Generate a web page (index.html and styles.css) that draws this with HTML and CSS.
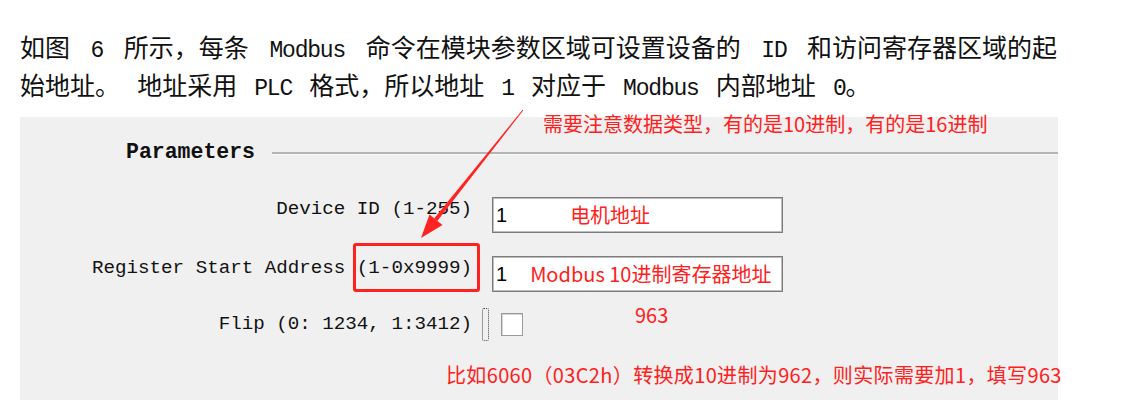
FILE: index.html
```html
<!DOCTYPE html>
<html>
  <head>
    <title>Modbus Parameters</title>
    <link rel="stylesheet" href="styles.css">
  </head>

  <body>
    <div class="page">
      <div class="doc">
        <p class="line line-first">如图<span class="en"> 6 </span>所示，每条<span class="en"> Modbus </span>命令在模块参数区域可设置设备的<span class="en"> ID </span>和访问寄存器区域的起</p>
        <p class="line line-last">始地址。<span class="en"> </span>地址采用<span class="en"> PLC </span>格式，所以地址<span class="en"> 1 </span>对应于<span class="en"> Modbus </span>内部地址<span class="en"> 0</span>。</p>
      </div>

      <div class="panel">
        <div class="legend">
          <span class="legend-title">Parameters</span>
          <span class="legend-rule"></span>
        </div>

        <div class="field field-id">
          <label class="field-label">Device ID (1-255)</label>
          <div class="text-box">
            <span class="value">1</span>
            <span class="note note-id">电机地址</span>
          </div>
        </div>

        <div class="field field-register">
          <label class="field-label">Register Start Address (1-0x9999)</label>
          <div class="text-box">
            <span class="value">1</span>
            <span class="note note-register">Modbus 10进制寄存器地址</span>
          </div>
        </div>

        <div class="field field-flip">
          <label class="field-label">Flip (0: 1234, 1:3412)</label>
          <span class="focus-rect"></span>
          <span class="check-box"></span>
        </div>

        <!-- annotations drawn over the dialog -->
        <div class="mark-box"></div>
        <div class="note note-type">需要注意数据类型，有的是10进制，有的是16进制</div>
        <div class="note note-963">963</div>
        <div class="note note-example">比如6060（03C2h）转换成10进制为962，则实际需要加1，填写963</div>
      </div>

      <svg class="arrow" width="1125" height="413" viewBox="0 0 1125 413">
        <polygon points="523.4,110.3 522.6,109.7 434.1,218.6 437.3,221.0" fill="#ff2323" />
        <polygon points="421,238 429.5,214.5 442.5,225" fill="#ff2323" />
      </svg>
    </div>
  </body>
</html>
```

FILE: styles.css
```css
body {
  margin: 0;
  background: #fff;
  font-family: "Noto Sans CJK SC", sans-serif;
}

.page {
  position: relative;
  width: 1125px;
  height: 413px;
  overflow: hidden;
}

.doc {
  padding: 30px 0 0 20px;
  height: 117px;
  box-sizing: border-box;
}

.line {
  margin: 0;
  font-size: 25px;
  line-height: 33px;
  color: #111;
  white-space: nowrap;
}

.line-first {
  word-spacing: 8px;
}

.line-last {
  word-spacing: 4.5px;
}

.en {
  font-family: "Liberation Mono", monospace;
  font-size: 23px;
  letter-spacing: -1.2px;
  white-space: pre;
}

.panel {
  position: relative;
  margin-left: 20px;
  width: 1038px;
  height: 283px;
  background: #f0f0f0;
  padding-top: 22px;
  box-sizing: border-box;
}

.legend {
  display: flex;
  align-items: center;
  padding-left: 106px;
  height: 26px;
}

.legend-title {
  font-family: "Liberation Mono", monospace;
  font-weight: bold;
  font-size: 21.5px;
  color: #111;
}

.legend-rule {
  flex: 1;
  margin-left: 17px;
  margin-top: 2px;
  border-top: 2px solid #b4b4b4;
  border-bottom: 1px solid #fafafa;
}

.field {
  display: flex;
  align-items: flex-start;
}

.field-id {
  margin-top: 32px;
}

.field-register {
  margin-top: 23px;
}

.field-flip {
  margin-top: 16px;
  align-items: center;
  height: 32px;
}

.field-label {
  width: 452px;
  text-align: right;
  font-family: "Liberation Mono", monospace;
  font-size: 19.2px;
  line-height: 24px;
  color: #111;
}

.text-box {
  display: flex;
  align-items: center;
  margin-left: 20px;
  width: 291px;
  height: 36px;
  box-sizing: border-box;
  padding-left: 3px;
  background: #fff;
  border: 1px solid #7c7c7c;
  box-shadow: inset 0 0 0 1px #bdbdbd;
}

.value {
  font-family: "Liberation Sans", sans-serif;
  font-size: 20px;
  color: #000;
}

.note {
  font-family: "Noto Sans CJK SC", sans-serif;
  font-size: 20px;
  line-height: 24px;
  color: #ff2020;
  white-space: nowrap;
}

.note-id {
  margin-left: 63px;
}

.note-register {
  margin-left: 23px;
}

.focus-rect {
  margin-left: 10px;
  width: 5px;
  height: 31px;
  border: 1px dotted #444;
  border-radius: 2px;
}

.check-box {
  margin-left: 12px;
  width: 22px;
  height: 23px;
  box-sizing: border-box;
  background: #fff;
  border: 1px solid #9a9a9a;
  box-shadow: inset 1px 1px 0 #d4d4d4;
}

.mark-box {
  position: absolute;
  left: 333px;
  top: 126px;
  width: 127px;
  height: 49px;
  box-sizing: border-box;
  border: 3px solid #ff2020;
  border-radius: 3px;
}

.note-type {
  position: absolute;
  left: 523px;
  top: -5px;
}

.note-963 {
  position: absolute;
  left: 615px;
  top: 186px;
}

.note-example {
  position: absolute;
  left: 426px;
  top: 246px;
  letter-spacing: 0.35px;
}

.arrow {
  position: absolute;
  left: 0;
  top: 0;
  pointer-events: none;
}
```
